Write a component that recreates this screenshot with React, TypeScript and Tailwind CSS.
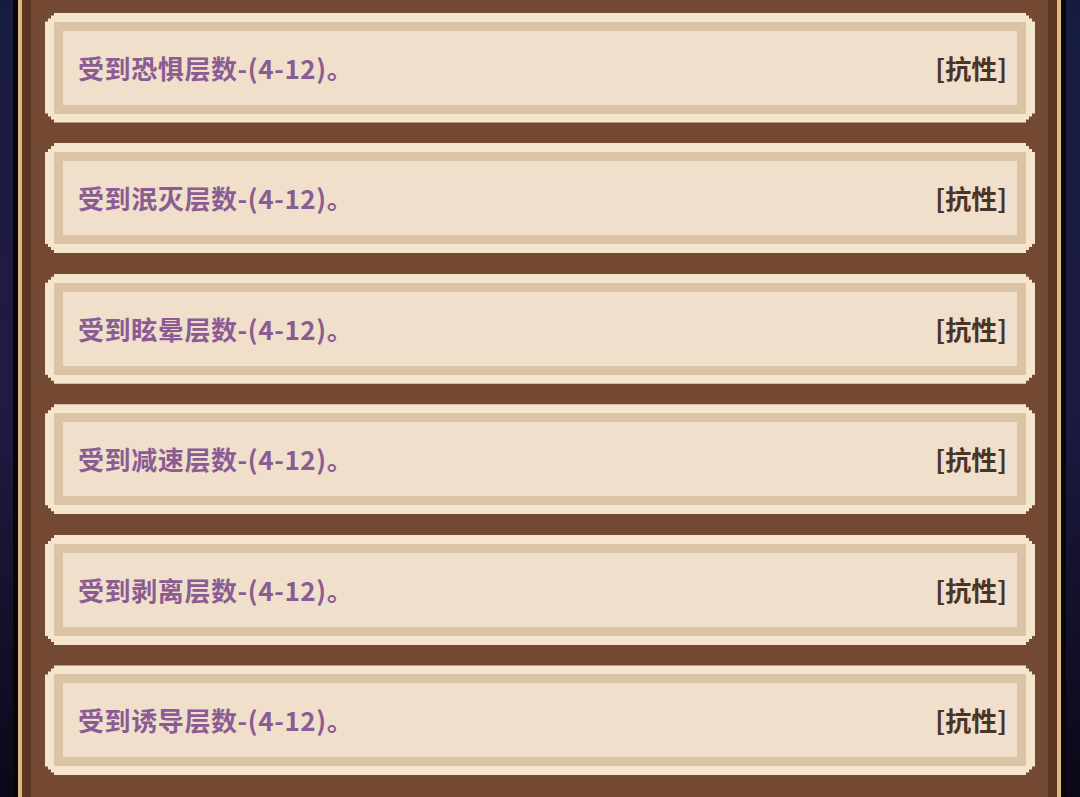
import React from "react";

const items = ["恐惧", "泯灭", "眩晕", "减速", "剥离", "诱导"];

const stepClip =
  "[clip-path:polygon(9px_0,calc(100%_-_9px)_0,calc(100%_-_9px)_3px,calc(100%_-_6px)_3px,calc(100%_-_6px)_6px,calc(100%_-_3px)_6px,calc(100%_-_3px)_9px,100%_9px,100%_calc(100%_-_9px),calc(100%_-_3px)_calc(100%_-_9px),calc(100%_-_3px)_calc(100%_-_6px),calc(100%_-_6px)_calc(100%_-_6px),calc(100%_-_6px)_calc(100%_-_3px),calc(100%_-_9px)_calc(100%_-_3px),calc(100%_-_9px)_100%,9px_100%,9px_calc(100%_-_3px),6px_calc(100%_-_3px),6px_calc(100%_-_6px),3px_calc(100%_-_6px),3px_calc(100%_-_9px),0_calc(100%_-_9px),0_9px,3px_9px,3px_6px,6px_6px,6px_3px,9px_3px)]";

function Card({ name }: { name: string }) {
  return (
    <div className={`h-[110px] shrink-0 bg-[#f5e5cf] p-[9px] ${stepClip}`}>
      <div className="h-full bg-[#dbc3a6] p-[9px]">
        <div className="flex h-full items-center justify-between bg-[#f0dfca] pl-[15px] pr-[10px]">
          <span className="text-[26px] font-bold leading-none tracking-[0.6px] text-[#8a5c93]">
            受到{name}层数-(4-12)。
          </span>
          <span className="text-[26px] font-bold leading-none text-[#4b3328]">
            [抗性]
          </span>
        </div>
      </div>
    </div>
  );
}

export default function App() {
  return (
    <div
      className="flex h-[797px] w-[1080px] overflow-hidden"
      style={{ fontFamily: '"Noto Sans CJK SC", "Noto Sans", sans-serif' }}
    >
      <div className="w-[13px] bg-gradient-to-b from-[#161c40] via-[#231a44] to-[#0c0818]" />
      <div className="w-[5px] bg-[#0a0606]" />
      <div className="w-[4px] bg-[#dcbb7e]" />
      <div className="w-[9px] bg-[#5b3522]" />
      <div className="flex flex-1 flex-col gap-[20.6px] bg-[#744934] pl-[14px] pr-[13px] pt-[12.5px]">
        {items.map((n) => (
          <Card key={n} name={n} />
        ))}
      </div>
      <div className="w-[9px] bg-[#5b3522]" />
      <div className="w-[4px] bg-[#dcbb7e]" />
      <div className="w-[5px] bg-[#0a0606]" />
      <div className="w-[14px] bg-gradient-to-b from-[#161c40] via-[#1c1a42] to-[#0c0818]" />
    </div>
  );
}
